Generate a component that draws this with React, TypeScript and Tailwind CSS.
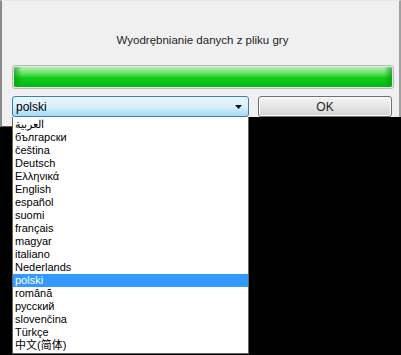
const languages = [
  "العربية",
  "български",
  "čeština",
  "Deutsch",
  "Ελληνικά",
  "English",
  "español",
  "suomi",
  "français",
  "magyar",
  "italiano",
  "Nederlands",
  "polski",
  "română",
  "русский",
  "slovenčina",
  "Türkçe",
  "中文(简体)",
];

export default function App() {
  const selected = "polski";

  return (
    <div
      className="h-[355px] w-[401px] overflow-hidden bg-black text-[12px] text-black"
      style={{ fontFamily: '"Liberation Sans", "Noto Sans CJK SC", sans-serif' }}
    >
      {/* dialog body */}
      <div className="h-[117px] border-l-2 border-r-2 border-t border-l-[#8a8a8a] border-r-[#a0a0a0] border-t-[#e6e6e6] bg-[#f0f0f0]">
        <div className="pl-[4px] pt-[31px] text-center text-[11.5px] leading-[16px] text-[#1e1e1e]">
          Wyodrębnianie danych z pliku gry
        </div>

        {/* progress bar */}
        <div className="ml-[10px] mr-[5px] mt-[17px] h-[24px] rounded-[3px] border border-[#b8b8b8] bg-[#e6e6e6] p-px">
          <div className="relative h-full overflow-hidden rounded-[2px] bg-gradient-to-b from-[#b4f2b4] via-[#10d21c] to-[#05b412]">
            <div className="absolute inset-y-0 left-0 w-[8px] bg-gradient-to-r from-[#0a9a14]/70 to-transparent" />
            <div className="absolute inset-y-0 right-0 w-[8px] bg-gradient-to-l from-[#0a9a14]/70 to-transparent" />
          </div>
        </div>

        <div className="ml-[10px] mt-[7px] flex items-start gap-[9px]">
          {/* combobox */}
          <div className="flex h-[21px] w-[237px] items-center justify-between rounded-[3px] border border-[#3c7fb1] bg-gradient-to-b from-[#eaf6fd] via-[#d9f0fc] to-[#a7d9f5] pl-[3px] pr-[6px]">
            <span className="leading-none">{selected}</span>
            <svg width="7" height="4" viewBox="0 0 7 4">
              <path d="M0 0h7L3.5 4z" fill="#111" />
            </svg>
          </div>
          {/* OK button */}
          <button className="flex h-[21px] w-[134px] items-center justify-center rounded-[3px] border border-[#707070] bg-gradient-to-b from-[#f4f4f4] via-[#e6e6e6] to-[#d2d2d2] text-[12px] leading-none text-[#1e1e1e] shadow-[inset_0_0_0_1px_#fbfbfb]">
            OK
          </button>
        </div>
      </div>

      {/* open dropdown list */}
      <div className="flex">
        <div className="w-[12px] shrink-0">
          <div className="h-[10px] border-b border-b-[#555] border-l-2 border-l-[#8a8a8a] bg-[#f0f0f0]" />
        </div>
        <ul className="w-[237px] border border-t-0 border-[#646464] bg-white pb-px pt-px">
          {languages.map((lang) => (
            <li
              key={lang}
              className={`h-[13px] pl-[2px] text-[11px] leading-[13px] ${
                lang === selected ? "bg-[#3399ff] text-white" : ""
              }`}
            >
              {lang}
            </li>
          ))}
        </ul>
      </div>
    </div>
  );
}
